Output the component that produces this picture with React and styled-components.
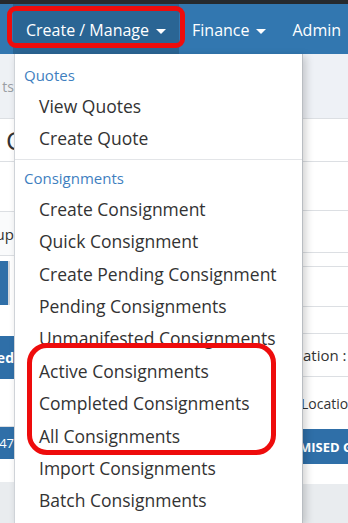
import React from "react";
import styled, { createGlobalStyle } from "styled-components";

const GlobalStyle = createGlobalStyle`
  html, body {
    margin: 0;
    padding: 0;
    background: #eef0f3;
  }
  body {
    font-family: "Open Sans", "Liberation Sans", sans-serif;
  }
`;

const Page = styled.div`
  position: relative;
  width: 348px;
  height: 523px;
  overflow: hidden;
  display: flex;
  flex-direction: column;
  background: #eef0f3;
`;

const TopStrip = styled.div`
  height: 4px;
  background: #262a2e;
`;

const NavBar = styled.nav`
  display: flex;
  align-items: stretch;
  height: 50px;
  padding-left: 13px;
  background: #3277b0;
`;

const NavItem = styled.div`
  display: flex;
  align-items: center;
  padding: 2px 13px 0;
  color: #fff;
  font-size: 16px;
  white-space: nowrap;
  background: ${(p) => (p.$active ? "#2a6594" : "transparent")};
`;

const Caret = styled.span`
  display: inline-block;
  margin-left: 7px;
  margin-top: 2px;
  border-top: 5px solid #fff;
  border-left: 5px solid transparent;
  border-right: 5px solid transparent;
`;

const Body = styled.div`
  flex: 1;
  display: flex;
  min-height: 0;
`;

const Peek = styled.div`
  width: ${(p) => p.$width};
  flex: ${(p) => (p.$grow ? 1 : "none")};
  display: flex;
  flex-direction: column;
  overflow: hidden;
`;

const PeekRow = styled.div`
  height: ${(p) => p.$h}px;
  flex: ${(p) => (p.$fill ? 1 : "none")};
  display: flex;
  align-items: center;
  justify-content: ${(p) => (p.$end ? "flex-end" : "flex-start")};
  background: ${(p) => p.$bg || "#fff"};
  border-bottom: ${(p) => (p.$line ? "1px solid #dcdfe3" : "none")};
  color: ${(p) => p.$color || "#444"};
  font-size: ${(p) => p.$size || 14}px;
  font-weight: ${(p) => (p.$bold ? 700 : 400)};
  white-space: nowrap;
  box-sizing: border-box;
  padding-left: ${(p) => p.$pl || 0}px;
`;

const Shifted = styled.span`
  margin-left: ${(p) => p.$shift}px;
`;

const Chip = styled.div`
  width: 8px;
  height: 44px;
  background: #2f6fa8;
  border-right: 2px solid #d6d9dd;
  margin-top: 4px;
`;

const Menu = styled.div`
  position: relative;
  z-index: 2;
  width: 289px;
  box-sizing: border-box;
  background: #fff;
  border-left: 1px solid #cfd3d8;
  border-right: 1px solid #b9bdc2;
  box-shadow: 3px 2px 8px rgba(0, 0, 0, 0.18);
  padding-top: 9px;
`;

const Header = styled.div`
  height: 24px;
  line-height: 24px;
  padding-left: 9px;
  margin-bottom: 3px;
  color: #3f7fbf;
  font-size: 15px;
`;

const Item = styled.div`
  height: 32.4px;
  line-height: 32.4px;
  padding-left: 24px;
  color: #333;
  font-size: 17.5px;
  white-space: nowrap;
`;

const Divider = styled.div`
  height: 1px;
  margin: 4px 0 6px;
  background: #e3e5e8;
`;

const Highlight = styled.div`
  position: absolute;
  left: ${(p) => p.$x}px;
  top: ${(p) => p.$y}px;
  width: ${(p) => p.$w}px;
  height: ${(p) => p.$h}px;
  box-sizing: border-box;
  border: 5px solid #ee0c0c;
  border-radius: ${(p) => p.$r}px;
  z-index: 5;
  pointer-events: none;
`;

const quotes = ["View Quotes", "Create Quote"];
const consignments = [
  "Create Consignment",
  "Quick Consignment",
  "Create Pending Consignment",
  "Pending Consignments",
  "Unmanifested Consignments",
  "Active Consignments",
  "Completed Consignments",
  "All Consignments",
  "Import Consignments",
  "Batch Consignments",
];

export default function App() {
  return (
    <>
      <GlobalStyle />
      <Page>
        <TopStrip />
        <NavBar>
          <NavItem $active>
            Create / Manage <Caret />
          </NavItem>
          <NavItem>
            Finance <Caret />
          </NavItem>
          <NavItem>Admin</NavItem>
        </NavBar>
        <Body>
          <Peek $width="14px">
            <PeekRow $h={65} $bg="#eef1f5" $line $end $color="#9a9ea4">
              ts
            </PeekRow>
            <PeekRow $h={43} $line $size={26} $color="#333" $pl={6}>
              C
            </PeekRow>
            <PeekRow $h={50} $line />
            <PeekRow $h={44} $bg="#fafbfc" $line $end $color="#333" $size={15}>
              up
            </PeekRow>
            <PeekRow $h={50}>
              <Chip />
            </PeekRow>
            <PeekRow $h={30} />
            <PeekRow $h={43} $bg="#2f6fa8" $end $color="#fff" $bold>
              ed
            </PeekRow>
            <PeekRow $h={48} $line />
            <PeekRow $h={32} $bg="#2f6fa8" $end $color="#fff" $size={13}>
              47
            </PeekRow>
            <PeekRow $h={23} />
            <PeekRow $fill $bg="#e9ecef" />
          </Peek>
          <Menu>
            <Header>Quotes</Header>
            {quotes.map((q) => (
              <Item key={q}>{q}</Item>
            ))}
            <Divider />
            <Header>Consignments</Header>
            {consignments.map((c) => (
              <Item key={c}>{c}</Item>
            ))}
          </Menu>
          <Peek $grow>
            <PeekRow $h={65} $bg="#eef1f6" $line />
            <PeekRow $h={43} $line />
            <PeekRow $h={49} $line />
            <PeekRow $h={42} $line />
            <PeekRow $h={14} $line />
            <PeekRow $h={40} $line />
            <PeekRow $h={27} $line />
            <PeekRow $h={43} $line $color="#333" $size={15}>
              ation :
            </PeekRow>
            <PeekRow $h={52} $color="#333" $size={14}>
              <Shifted $shift={-2}>Locatio</Shifted>
            </PeekRow>
            <PeekRow $h={35} $bg="#2f6fa8" $color="#fff" $bold $size={13}>
              <Shifted $shift={-4}>MISED G</Shifted>
            </PeekRow>
            <PeekRow $h={20} />
            <PeekRow $fill $bg="#e9ecef" />
          </Peek>
        </Body>
        <Highlight $x={7} $y={6} $w={178} $h={42} $r={9} />
        <Highlight $x={27} $y={343} $w={249} $h={112} $r={20} />
      </Page>
    </>
  );
}
